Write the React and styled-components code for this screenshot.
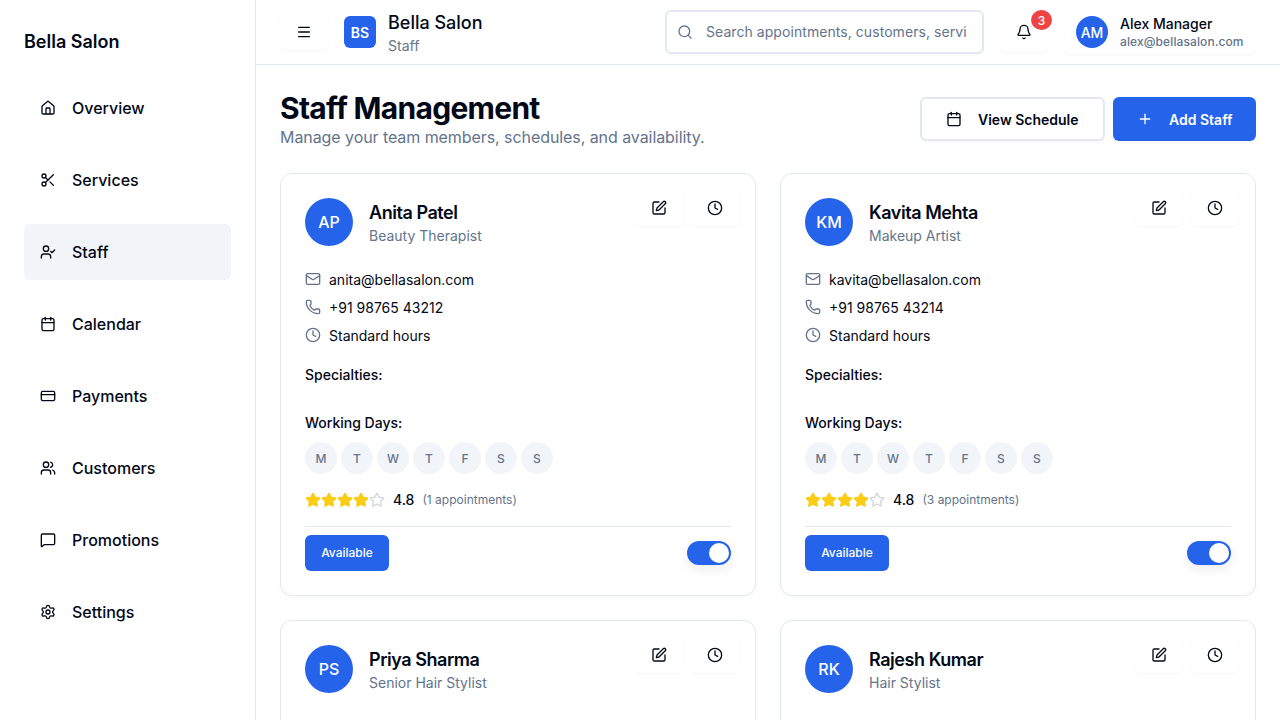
import React from "react";
import styled, { createGlobalStyle } from "styled-components";
import {
  Bell,
  Calendar,
  Clock,
  CreditCard,
  House,
  Mail,
  Menu,
  MessageSquare,
  Phone,
  Plus,
  Scissors,
  Search,
  Settings,
  SquarePen,
  Star,
  UserCheck,
  Users,
} from "lucide-react";

const navItems = [
  { label: "Overview", icon: House },
  { label: "Services", icon: Scissors },
  { label: "Staff", icon: UserCheck, active: true },
  { label: "Calendar", icon: Calendar },
  { label: "Payments", icon: CreditCard },
  { label: "Customers", icon: Users },
  { label: "Promotions", icon: MessageSquare },
  { label: "Settings", icon: Settings },
];

const staff = [
  {
    initials: "AP",
    name: "Anita Patel",
    role: "Beauty Therapist",
    email: "anita@bellasalon.com",
    phone: "+91 98765 43212",
    appointments: 1,
  },
  {
    initials: "KM",
    name: "Kavita Mehta",
    role: "Makeup Artist",
    email: "kavita@bellasalon.com",
    phone: "+91 98765 43214",
    appointments: 3,
  },
  {
    initials: "PS",
    name: "Priya Sharma",
    role: "Senior Hair Stylist",
    email: "priya@bellasalon.com",
    phone: "+91 98765 43210",
    appointments: 2,
  },
  {
    initials: "RK",
    name: "Rajesh Kumar",
    role: "Hair Stylist",
    email: "rajesh@bellasalon.com",
    phone: "+91 98765 43211",
    appointments: 4,
  },
];

const days = ["M", "T", "W", "T", "F", "S", "S"];

function StaffCard({ person }) {
  return (
    <Card>
      <CardTop>
        <Avatar>{person.initials}</Avatar>
        <NameBlock>
          <StaffName>{person.name}</StaffName>
          <StaffRole>{person.role}</StaffRole>
        </NameBlock>
        <CardActions>
          <GhostButton>
            <SquarePen size={16} />
          </GhostButton>
          <GhostButton>
            <Clock size={16} />
          </GhostButton>
        </CardActions>
      </CardTop>

      <ContactList>
        <ContactRow>
          <Mail size={16} />
          {person.email}
        </ContactRow>
        <ContactRow>
          <Phone size={16} />
          {person.phone}
        </ContactRow>
        <ContactRow>
          <Clock size={16} />
          Standard hours
        </ContactRow>
      </ContactList>

      <SpecialtyLabel>Specialties:</SpecialtyLabel>
      <SectionLabel>Working Days:</SectionLabel>
      <DayRow>
        {days.map((day, index) => (
          <DayDot key={index}>{day}</DayDot>
        ))}
      </DayRow>

      <RatingRow>
        <Stars>
          {[0, 1, 2, 3, 4].map((i) => (
            <StarIcon key={i} $filled={i < 4}>
              <Star size={16} />
            </StarIcon>
          ))}
        </Stars>
        <RatingValue>4.8</RatingValue>
        <RatingCount>({person.appointments} appointments)</RatingCount>
      </RatingRow>

      <CardFooter>
        <AvailableButton>Available</AvailableButton>
        <Toggle>
          <ToggleKnob />
        </Toggle>
      </CardFooter>
    </Card>
  );
}

export default function App() {
  return (
    <Shell>
      <GlobalStyle />
      <Sidebar>
        <SideBrand>Bella Salon</SideBrand>
        <Nav>
          {navItems.map(({ label, icon: Icon, active }) => (
            <NavItem key={label} $active={active}>
              <Icon size={16} />
              {label}
            </NavItem>
          ))}
        </Nav>
      </Sidebar>

      <Content>
        <Header>
          <MenuButton>
            <Menu size={16} />
          </MenuButton>
          <LogoBox>BS</LogoBox>
          <TitleBlock>
            <HeaderTitle>Bella Salon</HeaderTitle>
            <HeaderSub>Staff</HeaderSub>
          </TitleBlock>
          <SearchBox>
            <Search size={16} />
            <SearchInput
              readOnly
              placeholder="Search appointments, customers, services..."
            />
          </SearchBox>
          <BellButton>
            <Bell size={16} />
            <Badge>3</Badge>
          </BellButton>
          <UserChip>
            <UserAvatar>AM</UserAvatar>
            <UserText>
              <UserName>Alex Manager</UserName>
              <UserMail>alex@bellasalon.com</UserMail>
            </UserText>
          </UserChip>
        </Header>

        <Main>
          <PageHead>
            <div>
              <PageTitle>Staff Management</PageTitle>
              <PageSub>Manage your team members, schedules, and availability.</PageSub>
            </div>
            <PageActions>
              <OutlineButton>
                <Calendar size={16} />
                View Schedule
              </OutlineButton>
              <PrimaryButton>
                <Plus size={16} />
                Add Staff
              </PrimaryButton>
            </PageActions>
          </PageHead>
          <CardGrid>
            {staff.map((person) => (
              <StaffCard key={person.initials} person={person} />
            ))}
          </CardGrid>
        </Main>
      </Content>
    </Shell>
  );
}

const GlobalStyle = createGlobalStyle`
  * {
    box-sizing: border-box;
  }
  html,
  body {
    margin: 0;
    height: 100%;
    overflow: hidden;
    background: #fff;
    font-family: Inter, "Liberation Sans", sans-serif;
    font-feature-settings: "rlig" 1, "calt" 1;
    -webkit-font-smoothing: antialiased;
    text-rendering: optimizeLegibility;
    color: #020817;
  }
`;

const softShadow = "0 1px 3px rgba(15, 23, 42, 0.04)";

const Shell = styled.div`
  display: flex;
  width: 1280px;
  height: 720px;
  overflow: hidden;
`;

const Sidebar = styled.aside`
  width: 256px;
  flex: none;
  border-right: 1px solid #e2e8f0;
  padding: 24px;
`;

const SideBrand = styled.div`
  height: 32px;
  padding-top: 2px;
  line-height: 32px;
  font-size: 18px;
  font-weight: 600;
`;

const Nav = styled.nav`
  display: flex;
  flex-direction: column;
  gap: 16px;
  margin-top: 24px;
`;

const NavItem = styled.div`
  display: flex;
  align-items: center;
  gap: 16px;
  width: 207px;
  height: 56px;
  padding-left: 16px;
  border-radius: 6px;
  font-size: 16px;
  font-weight: 500;
  background: ${(p) => (p.$active ? "#f1f5f9" : "transparent")};
`;

const Content = styled.div`
  flex: 1;
  min-width: 0;
  display: flex;
  flex-direction: column;
`;

const Header = styled.header`
  height: 65px;
  flex: none;
  display: flex;
  align-items: center;
  padding: 0 24px;
  border-bottom: 1px solid #e2e8f0;
`;

const MenuButton = styled.div`
  width: 48px;
  height: 36px;
  border-radius: 6px;
  display: flex;
  align-items: center;
  justify-content: center;
  box-shadow: ${softShadow};
  margin-right: 16px;
  flex: none;
`;

const LogoBox = styled.div`
  width: 32px;
  height: 32px;
  border-radius: 6px;
  background: #2563eb;
  color: #fff;
  font-size: 14px;
  font-weight: 600;
  display: flex;
  align-items: center;
  justify-content: center;
  margin-right: 12px;
  flex: none;
`;

const TitleBlock = styled.div`
  flex: 1;
  min-width: 0;
`;

const HeaderTitle = styled.div`
  padding-top: 2px;
  font-size: 18px;
  font-weight: 500;
  line-height: 26px;
`;

const HeaderSub = styled.div`
  font-size: 14px;
  line-height: 20px;
  color: #64748b;
`;

const SearchBox = styled.div`
  width: 319px;
  height: 44px;
  flex: none;
  display: flex;
  align-items: center;
  gap: 13px;
  padding: 0 16px 0 10px;
  border: 2px solid #e2e8f0;
  border-radius: 6px;
  color: #64748b;
  box-shadow: ${softShadow};
`;

const SearchInput = styled.input`
  flex: 1;
  min-width: 0;
  border: 0;
  outline: 0;
  padding: 0 0 1px;
  background: transparent;
  font: 400 14px Inter, sans-serif;
  letter-spacing: 0.06px;
  color: #64748b;
  &::placeholder {
    color: #64748b;
    opacity: 1;
  }
`;

const BellButton = styled.div`
  position: relative;
  width: 48px;
  height: 40px;
  margin-left: 16px;
  flex: none;
  border-radius: 6px;
  display: flex;
  align-items: center;
  justify-content: center;
  box-shadow: ${softShadow};
`;

const Badge = styled.span`
  position: absolute;
  top: -2px;
  right: -4px;
  width: 21px;
  height: 20px;
  border-radius: 50%;
  background: #ef4444;
  color: #fff;
  font-size: 12px;
  font-weight: 500;
  display: flex;
  align-items: center;
  justify-content: center;
`;

const UserChip = styled.div`
  width: 191px;
  height: 44px;
  margin-left: 17px;
  flex: none;
  border-radius: 6px;
  display: flex;
  align-items: center;
  gap: 12px;
  padding-left: 11px;
  box-shadow: ${softShadow};
`;

const UserAvatar = styled.div`
  width: 32px;
  height: 32px;
  border-radius: 50%;
  flex: none;
  background: #2563eb;
  color: #fff;
  font-size: 14px;
  font-weight: 500;
  display: flex;
  align-items: center;
  justify-content: center;
`;

const UserText = styled.div`
  min-width: 0;
`;

const UserName = styled.div`
  font-size: 14px;
  font-weight: 500;
  line-height: 20px;
  white-space: nowrap;
`;

const UserMail = styled.div`
  font-size: 12px;
  font-weight: 500;
  line-height: 16px;
  letter-spacing: 0.1px;
  color: #64748b;
  white-space: nowrap;
`;

const Main = styled.main`
  flex: 1;
  min-height: 0;
  overflow: hidden;
  padding: 24px;
`;

const PageHead = styled.div`
  display: flex;
  justify-content: space-between;
  align-items: center;
  margin-bottom: 24px;
`;

const PageTitle = styled.h1`
  margin: 0;
  padding-top: 2px;
  font-size: 30px;
  font-weight: 700;
  line-height: 34px;
  letter-spacing: -0.72px;
`;

const PageSub = styled.p`
  margin: 0;
  font-size: 16px;
  line-height: 24px;
  letter-spacing: -0.07px;
  color: #64748b;
`;

const PageActions = styled.div`
  display: flex;
  gap: 8px;
`;

const OutlineButton = styled.div`
  width: 185px;
  height: 44px;
  border: 2px solid #e2e8f0;
  border-radius: 6px;
  display: flex;
  align-items: center;
  gap: 16px;
  padding-left: 24px;
  font-size: 14px;
  font-weight: 600;
  box-shadow: ${softShadow};
`;

const PrimaryButton = styled.div`
  width: 143px;
  height: 44px;
  border-radius: 6px;
  background: #2563eb;
  color: #fff;
  display: flex;
  align-items: center;
  gap: 16px;
  padding-left: 24px;
  font-size: 14px;
  font-weight: 600;
`;

const CardGrid = styled.div`
  display: grid;
  grid-template-columns: 476px 476px;
  gap: 24px;
`;

const Card = styled.article`
  height: 423px;
  border: 1px solid #e2e8f0;
  border-radius: 12px;
  padding: 24px;
  box-shadow: ${softShadow};
`;

const CardTop = styled.div`
  display: flex;
  align-items: center;
  gap: 16px;
`;

const Avatar = styled.div`
  width: 48px;
  height: 48px;
  border-radius: 50%;
  flex: none;
  background: #2563eb;
  color: #fff;
  font-size: 16px;
  font-weight: 500;
  display: flex;
  align-items: center;
  justify-content: center;
`;

const NameBlock = styled.div`
  flex: 1;
  min-width: 0;
`;

const StaffName = styled.div`
  padding-top: 2px;
  font-size: 18px;
  font-weight: 600;
  line-height: 26px;
  letter-spacing: -0.45px;
`;

const StaffRole = styled.div`
  font-size: 14px;
  line-height: 20px;
  color: #64748b;
`;

const CardActions = styled.div`
  display: flex;
  gap: 8px;
  align-self: flex-start;
  margin-top: -8px;
  margin-right: -8px;
`;

const GhostButton = styled.div`
  width: 48px;
  height: 36px;
  border-radius: 6px;
  display: flex;
  align-items: center;
  justify-content: center;
  box-shadow: ${softShadow};
`;

const ContactList = styled.div`
  display: flex;
  flex-direction: column;
  gap: 8px;
  margin-top: 23px;
`;

const ContactRow = styled.div`
  display: flex;
  align-items: center;
  gap: 8px;
  height: 20px;
  font-size: 14px;
  svg {
    color: #64748b;
    flex: none;
  }
`;

const SectionLabel = styled.div`
  font-size: 14px;
  font-weight: 500;
  line-height: 20px;
`;

const SpecialtyLabel = styled(SectionLabel)`
  margin-top: 20px;
  margin-bottom: 28px;
`;

const DayRow = styled.div`
  display: flex;
  gap: 4px;
  margin-top: 9px;
`;

const DayDot = styled.div`
  width: 32px;
  height: 32px;
  border-radius: 50%;
  background: #f1f5f9;
  color: #64748b;
  font-size: 12px;
  font-weight: 500;
  display: flex;
  align-items: center;
  justify-content: center;
`;

const RatingRow = styled.div`
  display: flex;
  align-items: center;
  margin-top: 16px;
  height: 20px;
  line-height: 18px;
`;

const Stars = styled.div`
  display: flex;
`;

const StarIcon = styled.span`
  display: flex;
  color: ${(p) => (p.$filled ? "#facc15" : "#d1d5db")};
  svg {
    fill: ${(p) => (p.$filled ? "#facc15" : "none")};
  }
`;

const RatingValue = styled.span`
  font-size: 14px;
  font-weight: 500;
  margin-left: 8px;
`;

const RatingCount = styled.span`
  font-size: 12px;
  color: #64748b;
  margin-left: 8px;
`;

const CardFooter = styled.div`
  display: flex;
  align-items: center;
  justify-content: space-between;
  margin-top: 16px;
  padding-top: 8px;
  border-top: 1px solid #e2e8f0;
`;

const AvailableButton = styled.div`
  width: 84px;
  height: 36px;
  padding-bottom: 1px;
  border-radius: 6px;
  background: #2563eb;
  color: #fff;
  font-size: 12px;
  font-weight: 500;
  display: flex;
  align-items: center;
  justify-content: center;
`;

const Toggle = styled.div`
  width: 44px;
  height: 24px;
  border-radius: 12px;
  background: #2563eb;
  border: 2px solid #2563eb;
  display: flex;
  justify-content: flex-end;
  box-shadow: 0 4px 12px rgba(15, 23, 42, 0.08);
`;

const ToggleKnob = styled.div`
  width: 20px;
  height: 20px;
  border-radius: 50%;
  background: #fff;
`;
